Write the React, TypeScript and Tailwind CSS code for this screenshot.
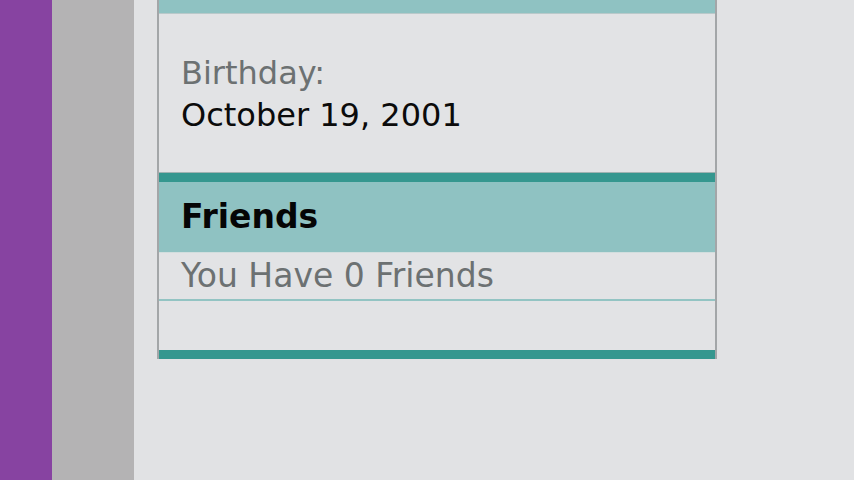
const Profile = () => {
  return (
    <div className="flex h-screen w-screen overflow-hidden bg-[#e1e2e4] font-['DejaVu_Sans',sans-serif]">
      <div className="w-[52px] shrink-0 bg-[#8743a1]" />
      <div className="w-[82px] shrink-0 bg-[#b4b3b4]" />
      <div className="flex-1 pl-[23px]">
        <div className="flex w-[560px] flex-col border-x-2 border-[#a3a6a8] bg-[#e2e3e5]">
          <div className="h-[14px] border-b border-[#b9c9ca] bg-[#8fc2c2]" />

          <div className="px-[22px] pt-[38px] pb-[36px] text-[32px] leading-[42px]">
            <div className="text-[#6c7172]">Birthday:</div>
            <div className="text-[#0b0b0b]">October 19, 2001</div>
          </div>

          <div className="h-[10px] border-t border-[#9fb3b2] bg-[#35978f]" />
          <div className="flex h-[70px] items-center bg-[#8fc2c2] px-[22px]">
            <h2 className="text-[33px] font-bold leading-[40px] text-[#050505]">Friends</h2>
          </div>
          <div className="flex h-[47px] items-center border-t border-[#d2dede] px-[22px]">
            <p className="text-[33px] leading-[40px] text-[#6c7172]">You Have 0 Friends</p>
          </div>
          <div className="h-[2px] bg-[#93c4c3]" />
          <div className="h-[49px]" />
          <div className="h-[9px] bg-[#35978f]" />
        </div>
      </div>
    </div>
  );
};

export default function App() {
  return <Profile />;
}
